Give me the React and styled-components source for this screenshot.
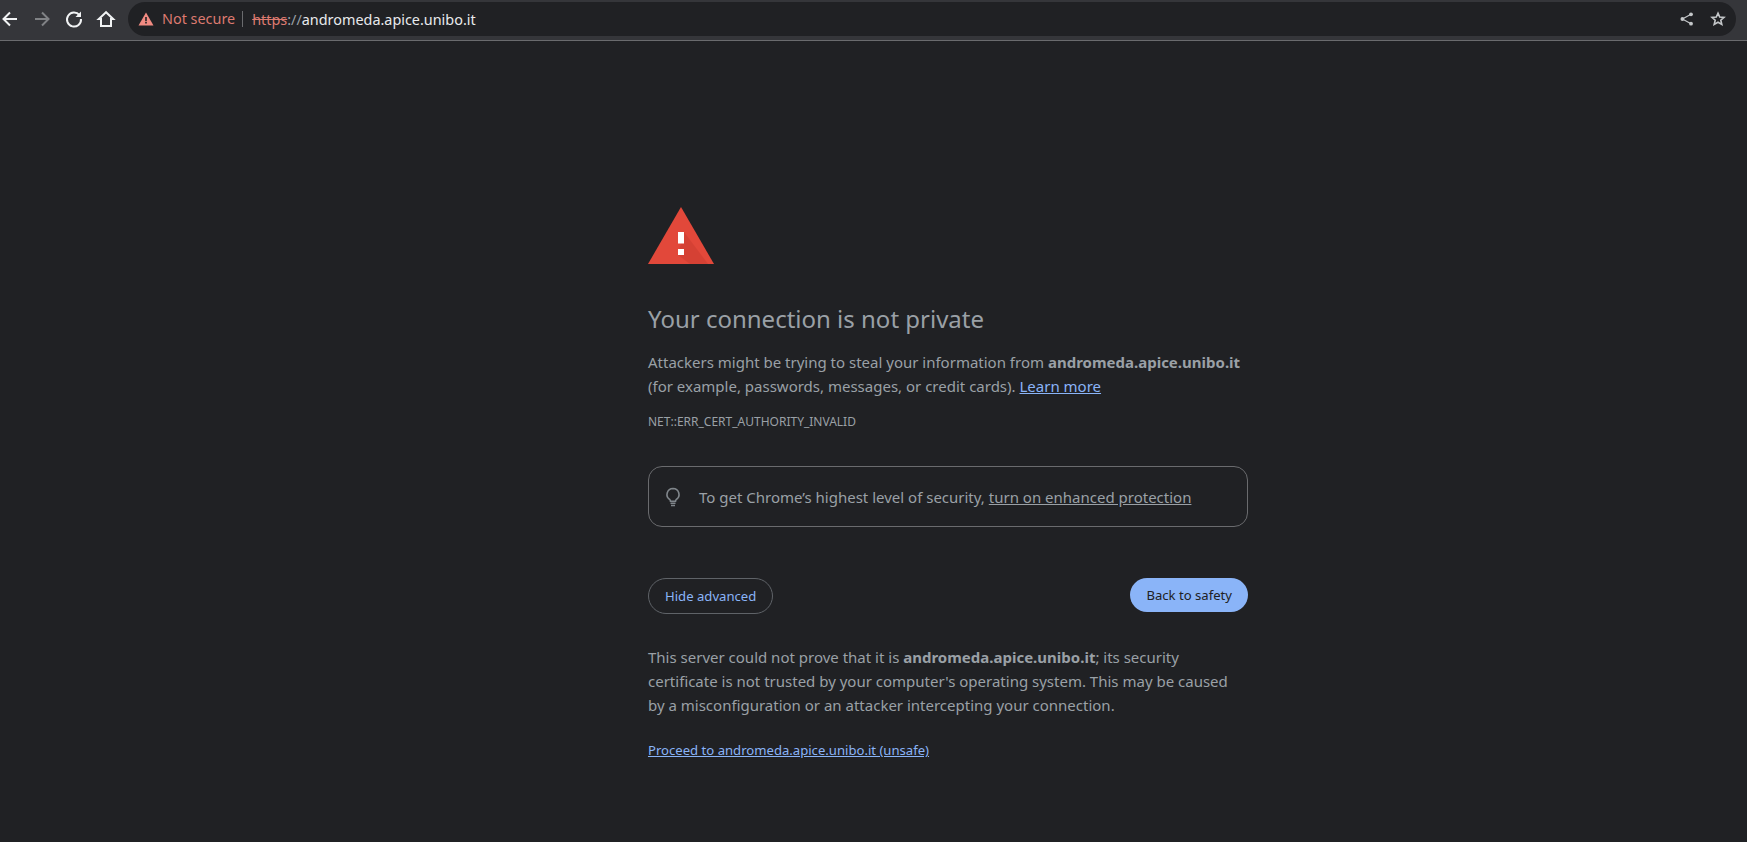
import React from 'react';
import styled, {createGlobalStyle} from 'styled-components';

const GlobalStyle = createGlobalStyle`
  html, body {
    margin: 0;
    height: 100%;
    background: #202124;
    font-family: "Noto Sans", sans-serif;
  }
`;

const Toolbar = styled.header`
  display: flex;
  align-items: center;
  height: 41px;
  box-sizing: border-box;
  padding: 0 11px 2px 0;
  background: #35363a;
  border-bottom: 1px solid #6a6b6e;
`;

const NavGroup = styled.nav`
  display: flex;
  gap: 12px;
`;

const NavButton = styled.button`
  display: flex;
  align-items: center;
  justify-content: center;
  flex: none;
  width: 20px;
  height: 32px;
  padding: 0;
  border: 0;
  background: none;
  color: ${p => p.$dim ? '#808285' : '#f1f3f4'};
`;

const Omnibox = styled.div`
  flex: 1;
  display: flex;
  align-items: center;
  height: 34px;
  margin-left: 12px;
  padding: 0 10px;
  border-radius: 17px;
  background: #202124;
  font-size: 14.4px;
`;

const NotSecure = styled.span`
  margin-left: 8px;
  padding-right: 7px;
  margin-right: 9px;
  line-height: 16px;
  color: #dd7a70;
  border-right: 1px solid #6a6b6e;
`;

const Scheme = styled.span`
  color: #dd7a70;
  text-decoration: line-through;
`;

const Slashes = styled.span`
  color: #9aa0a6;
`;

const Host = styled.span`
  flex: 1;
  color: #e8eaed;
`;

const OmniAction = styled.span`
  display: flex;
  margin-left: 15px;
  color: #c4c7c9;
`;

const Page = styled.main`
  box-sizing: border-box;
  width: 600px;
  margin: 0 0 0 648px;
  padding-top: 166px;
  color: #9aa0a6;
  font-size: 15px;
  line-height: 24px;
`;

const Heading = styled.h1`
  margin: 39px 0 16px;
  font-size: 24px;
  font-weight: 400;
  line-height: 30px;
  color: #9aa0a6;
`;

const Paragraph = styled.p`
  margin: 0;
`;

const Strong = styled.strong`
  font-weight: 700;
`;

const Link = styled.a`
  color: ${p => p.$muted ? 'inherit' : '#8ab4f8'};
  text-decoration: underline;
`;

const ErrorCode = styled.div`
  margin-top: 15px;
  font-size: 12px;
  line-height: 18px;
  color: #9aa0a6;
`;

const Promo = styled.div`
  display: flex;
  align-items: center;
  height: 61px;
  box-sizing: border-box;
  margin-top: 35px;
  padding: 0 16px;
  border: 1px solid #6a6b6e;
  border-radius: 14px;
`;

const PromoIcon = styled.span`
  display: flex;
  margin-right: 18px;
  color: #80868b;
`;

const Actions = styled.div`
  display: flex;
  justify-content: space-between;
  align-items: flex-start;
  margin-top: 51px;
`;

const Button = styled.button`
  box-sizing: border-box;
  height: ${p => p.$primary ? 34 : 36}px;
  padding: 0 16px;
  border: ${p => p.$primary ? '0' : '1px solid #5f6368'};
  border-radius: 18px;
  background: ${p => p.$primary ? '#8ab4f8' : 'transparent'};
  color: ${p => p.$primary ? '#202124' : '#8ab4f8'};
  font: 400 13.125px "Noto Sans", sans-serif;
`;

const Details = styled.p`
  margin: 31px 0 0;
`;

const Line = styled.span`
  display: block;
`;

const Proceed = styled.p`
  margin: 21px 0 0;
  font-size: 13.125px;
  line-height: 24px;
`;

const ArrowIcon = ({flip}) => (
  <svg width="20" height="20" viewBox="0 0 20 20" fill="none" stroke="currentColor" strokeWidth="2"
    style={flip ? {transform: 'scaleX(-1)'} : undefined}>
    <path d="M17 10H3.500M10 3.500 3.500 10l6.500 6.500" />
  </svg>
);

const ReloadIcon = () => (
  <svg width="20" height="20" viewBox="0 0 20 20" fill="none" stroke="currentColor" strokeWidth="2">
    <path d="M15.500 6.200A7 7 0 1 0 17 10" />
    <path d="M17 2.500v5.500h-5.500" fill="currentColor" stroke="none" />
  </svg>
);

const HomeIcon = () => (
  <svg width="20" height="20" viewBox="0 0 20 20" fill="none" stroke="currentColor" strokeWidth="2">
    <path d="M10 3.200 2.800 10H5v7h10v-7h2.200z" strokeLinejoin="miter" />
  </svg>
);

const WarnSmall = () => (
  <svg width="16" height="16" viewBox="0 0 16 16">
    <path d="M8 1.500 15.500 14.500H.5z" fill="#f28b82" />
    <path d="M7.200 6h1.600v4.200H7.200zM7.200 11h1.600v1.600H7.200z" fill="#202124" />
  </svg>
);

const ShareIcon = () => (
  <svg width="16" height="16" viewBox="0 0 16 16" fill="currentColor">
    <circle cx="12" cy="3.300" r="1.900" />
    <circle cx="12" cy="12.700" r="1.900" />
    <circle cx="3.400" cy="8" r="1.900" />
    <path d="M3.400 8 12 3.300M3.400 8l8.600 4.700" stroke="currentColor" strokeWidth="1.200" />
  </svg>
);

const StarIcon = () => (
  <svg width="16" height="16" viewBox="0 0 16 16" fill="none" stroke="currentColor" strokeWidth="1.600">
    <path d="M8 2.200 9.700 6l4.300.4-3.200 2.800 1 4.200L8 11.200l-3.800 2.200 1-4.200L2 6.400 6.300 6z" />
  </svg>
);

const BulbIcon = () => (
  <svg width="16" height="20" viewBox="0 0 16 20" fill="none" stroke="currentColor" strokeWidth="1.600">
    <path d="M8 1.500a6 6 0 0 0-3.300 11c.6.5.8 1 .8 1.700h5c0-.7.2-1.200.8-1.700A6 6 0 0 0 8 1.500z" />
    <path d="M5.500 16.200h5M6 18.500h4" />
  </svg>
);

const WarningIcon = () => (
  <svg width="66" height="58" viewBox="0 0 66 58" style={{display: 'block'}}>
    <path d="M33 0 66 57H0z" fill="#e2483a" />
    <path d="M36 25 60 57H42L30 48z" fill="#c53a2e" opacity=".45" />
    <path d="M30 25h6v11.500h-6zM30 42h6v6h-6z" fill="#fff" />
  </svg>
);

const App = () => (
  <>
    <GlobalStyle />
    <Toolbar>
      <NavGroup>
        <NavButton><ArrowIcon /></NavButton>
        <NavButton $dim><ArrowIcon flip /></NavButton>
        <NavButton><ReloadIcon /></NavButton>
        <NavButton><HomeIcon /></NavButton>
      </NavGroup>
      <Omnibox>
        <WarnSmall />
        <NotSecure>Not secure</NotSecure>
        <Scheme>https</Scheme>
        <Slashes>://</Slashes>
        <Host>andromeda.apice.unibo.it</Host>
        <OmniAction><ShareIcon /></OmniAction>
        <OmniAction><StarIcon /></OmniAction>
      </Omnibox>
    </Toolbar>
    <Page>
      <WarningIcon />
      <Heading>Your connection is not private</Heading>
      <Paragraph>
        <Line>Attackers might be trying to steal your information from <Strong>andromeda.apice.unibo.it</Strong></Line>
        <Line>(for example, passwords, messages, or credit cards). <Link href="#">Learn more</Link></Line>
      </Paragraph>
      <ErrorCode>NET::ERR_CERT_AUTHORITY_INVALID</ErrorCode>
      <Promo>
        <PromoIcon><BulbIcon /></PromoIcon>
        <span>To get Chrome’s highest level of security, <Link href="#" $muted>turn on enhanced protection</Link></span>
      </Promo>
      <Actions>
        <Button>Hide advanced</Button>
        <Button $primary>Back to safety</Button>
      </Actions>
      <Details>
        <Line>This server could not prove that it is <Strong>andromeda.apice.unibo.it</Strong>; its security</Line>
        <Line>certificate is not trusted by your computer's operating system. This may be caused</Line>
        <Line>by a misconfiguration or an attacker intercepting your connection.</Line>
      </Details>
      <Proceed><Link href="#">Proceed to andromeda.apice.unibo.it (unsafe)</Link></Proceed>
    </Page>
  </>
);

export default App;
